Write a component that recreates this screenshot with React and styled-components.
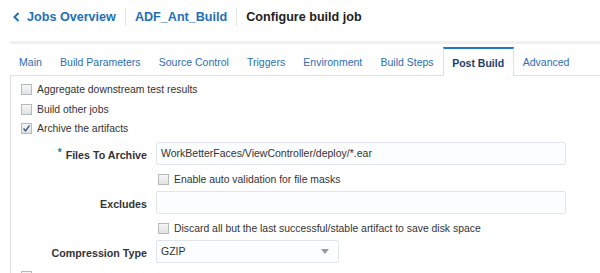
import React from "react";
import styled, { createGlobalStyle } from "styled-components";

const Global = createGlobalStyle`
  html, body { margin: 0; padding: 0; background: #fff; }
  body { font-family: "Liberation Sans", Arial, sans-serif; color: #333; overflow: hidden; }
  * { box-sizing: border-box; }
`;

const Page = styled.div`
  width: 600px;
  height: 273px;
  overflow: hidden;
`;

const Header = styled.div`
  display: flex;
  align-items: center;
  height: 41px;
  padding-left: 10px;
  padding-bottom: 8px;
`;

const Crumb = styled.a`
  display: flex;
  align-items: center;
  font-size: 12.6px;
  font-weight: bold;
  white-space: nowrap;
  color: ${(p) => (p.$current ? "#222" : "#1f6fb8")};
  padding: 0 9px;
  border-left: ${(p) => (p.$first ? "none" : "1px solid #e3e6ea")};
  padding-left: ${(p) => (p.$first ? "0" : "9px")};
  line-height: 18px;
  text-decoration: none;
`;

const Chevron = styled.svg`
  width: 9px;
  height: 10px;
  margin-right: 6px;
  margin-left: 2px;
`;

const Band = styled.div`
  margin-left: 10px;
  height: 3px;
  background: #eef0f3;
`;

const Tabs = styled.div`
  display: flex;
  align-items: flex-end;
  margin-top: 3px;
  margin-left: 10px;
  height: 28px;
`;

const Tab = styled.div`
  font-size: 10.5px;
  white-space: nowrap;
  display: flex;
  align-items: center;
  padding: 0 9.1px;
  height: 27px;
  color: ${(p) => (p.$active ? "#1a3e6b" : "#2d6db3")};
  font-weight: ${(p) => (p.$active ? "bold" : "normal")};
  background: #fff;
  ${(p) =>
    p.$active
      ? `border-top: 2px solid #1f76c9; border-left: 1px solid #dde1e6; border-right: 1px solid #dde1e6; position: relative; z-index: 1; margin-bottom: -1px; height: 29px; padding: 0 8.5px;`
      : ""}
`;

const Panel = styled.div`
  margin-left: 10px;
  border-top: 1px solid #dde1e6;
  border-left: 1px solid #dde1e6;
  padding: 4px 0 0 10px;
  height: 200px;
`;

const CheckRow = styled.label`
  display: flex;
  align-items: center;
  height: 19.5px;
  font-size: 10.4px;
  color: #333;
  white-space: nowrap;
`;

const Box = styled.span`
  width: 11px;
  height: 11px;
  border: 1px solid #b5b8bc;
  background: linear-gradient(#f6f6f6, #e2e2e2);
  margin-right: 5px;
  display: inline-flex;
  align-items: center;
  justify-content: center;
  flex: none;
`;

const Check = ({ checked }) => (
  <Box>
    {checked && (
      <svg width="9" height="9" viewBox="0 0 9 9">
        <path d="M1.5 4.5 L3.5 7 L7.5 1.5" fill="none" stroke="#3a5a8c" strokeWidth="1.3" />
      </svg>
    )}
  </Box>
);

const Form = styled.div`
  display: grid;
  grid-template-columns: 126px 410px;
  column-gap: 9px;
  margin-top: 3px;
  align-items: center;
`;

const Label = styled.div`
  font-size: 10.7px;
  font-weight: bold;
  color: #333;
  text-align: right;
  padding-top: 4px;
  white-space: nowrap;
`;

const Star = styled.span`
  color: #1f6fb8;
  font-weight: bold;
  margin-right: 4px;
  position: relative;
  top: -3px;
  font-size: 10px;
`;

const Input = styled.div`
  height: 23px;
  border: 1px solid #e1e4e8;
  border-radius: 2px;
  background: #fcfdfe;
  font-size: 10.5px;
  color: #333;
  display: flex;
  align-items: center;
  padding-left: 4px;
  width: ${(p) => p.$w || 410}px;
  justify-content: space-between;
  padding-right: 9px;
  white-space: nowrap;
`;

const SubCheck = styled(CheckRow)`
  grid-column: 2;
  height: 26px;
  padding-left: 2px;
  padding-top: 4px;
`;

const Arrow = styled.span`
  width: 0;
  height: 0;
  border-left: 4px solid transparent;
  border-right: 4px solid transparent;
  border-top: 5px solid #999;
`;

const Partial = styled(CheckRow)`
  margin-top: 4px;
`;

export default function App() {
  return (
    <Page>
      <Global />
      <Header>
        <Crumb $first>
          <Chevron viewBox="0 0 9 10">
            <path d="M6.5 1 L2.5 5 L6.5 9" fill="none" stroke="#1f6fb8" strokeWidth="2" />
          </Chevron>
          Jobs Overview
        </Crumb>
        <Crumb>ADF_Ant_Build</Crumb>
        <Crumb $current>Configure build job</Crumb>
      </Header>
      <Band />
      <Tabs>
        <Tab>Main</Tab>
        <Tab>Build Parameters</Tab>
        <Tab>Source Control</Tab>
        <Tab>Triggers</Tab>
        <Tab>Environment</Tab>
        <Tab>Build Steps</Tab>
        <Tab $active>Post Build</Tab>
        <Tab>Advanced</Tab>
      </Tabs>
      <Panel>
        <CheckRow><Check />Aggregate downstream test results</CheckRow>
        <CheckRow><Check />Build other jobs</CheckRow>
        <CheckRow><Check checked />Archive the artifacts</CheckRow>
        <Form>
          <Label><Star>*</Star>Files To Archive</Label>
          <Input>WorkBetterFaces/ViewController/deploy/*.ear</Input>
          <SubCheck><Check />Enable auto validation for file masks</SubCheck>
          <Label>Excludes</Label>
          <Input />
          <SubCheck><Check />Discard all but the last successful/stable artifact to save disk space</SubCheck>
          <Label>Compression Type</Label>
          <Input $w={183}>GZIP<Arrow /></Input>
        </Form>
        <Partial><Check /></Partial>
      </Panel>
    </Page>
  );
}
